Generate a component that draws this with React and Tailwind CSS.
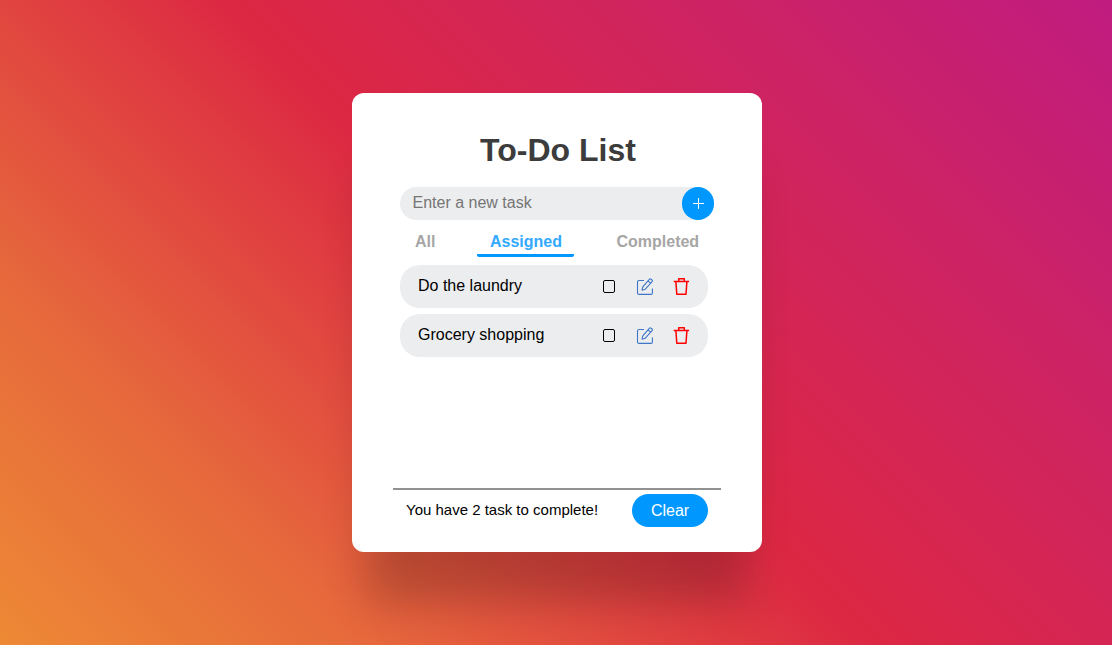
import { useState } from "react";

const tasks = ["Do the laundry", "Grocery shopping"];

function PlusIcon() {
  return (
    <svg width="11" height="11" viewBox="0 0 11 11" stroke="currentColor" fill="none">
      <path d="M5.5 0V11M0 5.5H11" />
    </svg>
  );
}

function EditIcon() {
  return (
    <svg width="18" height="17" viewBox="0 0 18 17" stroke="currentColor" strokeWidth="1.1" strokeLinejoin="round" fill="none">
      <path d="M8 2.5H3A1.5 1.5 0 0 0 1.5 4V15A1.5 1.5 0 0 0 3 16.4H15A1.5 1.5 0 0 0 16.400 14.900V10.500" />
      <path d="M6 12.200L6.800 8.800L13.300 1.400Q14 .5 14.900 1.100L16 2Q16.800 2.800 16.100 3.600L9.300 11.200ZM12 2.900L14.600 5.200" />
    </svg>
  );
}

function TrashIcon() {
  return (
    <svg width="17" height="17" viewBox="0 0 17 17" stroke="currentColor" strokeWidth="1.5" strokeLinejoin="round" fill="none">
      <path d="M.7 3.400H16.100M5.700 3.200V.8H11.300V3.200M2.900 3.600L3.800 16.200H13L13.900 3.600" />
    </svg>
  );
}

function Task({ name }) {
  return (
    <li className="flex h-[43px] items-center rounded-[20px] bg-[#ecedef] pr-[18px] pl-[18px]">
      <span className="grow pb-[2px] text-[16px] leading-5 text-black">{name}</span>
      <button className="mr-[21px] h-[13px] w-[12px] rounded-[2px] border border-black" aria-label="Complete" />
      <button className="mr-[19px] text-[#3f76c8]" aria-label="Edit">
        <EditIcon />
      </button>
      <button className="text-[#ff0000]" aria-label="Delete">
        <TrashIcon />
      </button>
    </li>
  );
}

export default function App() {
  const [value, setValue] = useState("");
  return (
    <main className="flex h-screen justify-center bg-[linear-gradient(45deg,#f09433_-7%,#e6683c_21.5%,#dc2743_50%,#cc2366_78.5%,#bc1888_107%)] pt-[93px] pl-[2px] font-['Liberation_Sans',Arial,sans-serif]">
      <section className="flex h-[459px] w-[410px] flex-col rounded-[12px] bg-white px-[41px] shadow-[0_65px_40px_-15px_rgba(0,0,0,0.2)]">
        <h1 className="mt-[38px] pl-[2px] text-center text-[32px] leading-[38px] font-bold text-[#3c3c3c]">To-Do List</h1>
        <div className="mt-[18px] ml-[7px] flex h-[33px] w-[314px] items-center justify-between rounded-full bg-[#ecedef]">
          <input
            className="h-full grow bg-transparent pb-[2px] pl-[12.5px] text-[16px] outline-none placeholder:text-[#757575]"
            placeholder="Enter a new task"
            value={value}
            onChange={(e) => setValue(e.target.value)}
          />
          <button className="flex h-[33px] w-[32px] items-center rounded-full bg-[#0098ff] pl-[11px] text-white" aria-label="Add">
            <PlusIcon />
          </button>
        </div>
        <nav className="mt-[10px] ml-[22px] flex h-[27px] text-[16px] leading-[24px] font-bold text-[#a6a6a6]">
          <button className="mr-[42px] flex">All</button>
          <button className="mr-[42px] w-[97px] rounded-[2px] border-b-[3px] border-[#0098ff] text-[#33a9ff]">Assigned</button>
          <button className="flex">Completed</button>
        </nav>
        <ul className="mt-[8px] ml-[7px] flex h-[223px] w-[308px] flex-col gap-[6px]">
          {tasks.map((t) => (
            <Task key={t} name={t} />
          ))}
        </ul>
        <footer className="flex justify-between border-t-2 border-[#919191] pt-[4px] pr-[13px] pl-[13px]">
          <p className="pt-[6px] text-[15px] leading-5 text-black">You have 2 task to complete!</p>
          <button className="h-[33px] w-[76px] rounded-full bg-[#0098ff] text-[16px] text-white">Clear</button>
        </footer>
      </section>
    </main>
  );
}
